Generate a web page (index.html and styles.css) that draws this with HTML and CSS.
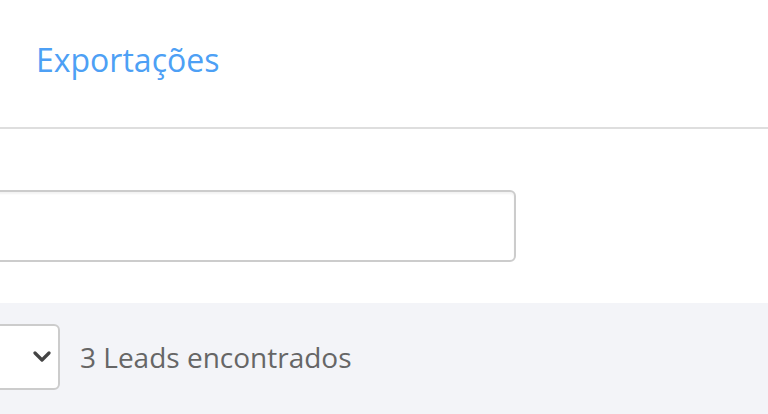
FILE: index.html
```html
<!DOCTYPE html>
<html lang="pt">
<head>
<meta charset="utf-8">
<link rel="stylesheet" href="styles.css">
</head>
<body>
<header class="header">
  <a class="tab">Exportações</a>
</header>
<section class="search">
  <div class="search-input"></div>
</section>
<section class="toolbar">
  <div class="select">
    <svg class="chevron" width="18" height="12" viewBox="0 0 18 12"><path d="M2 2 L9 9 L16 2" fill="none" stroke="#444" stroke-width="3.2" stroke-linecap="round" stroke-linejoin="round"/></svg>
  </div>
  <span class="count">3 Leads encontrados</span>
</section>
</body>
</html>
```
FILE: styles.css
```css
html, body {
  margin: 0;
  padding: 0;
  background: #fff;
  font-family: "Open Sans", "Noto Sans", sans-serif;
  overflow: hidden;
  height: 414px;
}
.header {
  height: 127px;
  border-bottom: 2px solid #dedede;
  display: flex;
  align-items: center;
  padding-left: 36px;
}
.tab {
  color: #4da0f5;
  font-size: 32px;
  line-height: 1;
  margin-top: -8px;
}
.search {
  height: 174px;
  padding-top: 61px;
  box-sizing: border-box;
}
.search-input {
  margin-left: -20px;
  width: 536px;
  height: 72px;
  box-sizing: border-box;
  border: 2px solid #ccc;
  border-radius: 6px;
  box-shadow: inset 0 2px 2px rgba(0,0,0,0.05);
}
.toolbar {
  background: #f3f4f8;
  height: 111px;
  display: flex;
  align-items: flex-start;
  padding-top: 21px;
  box-sizing: border-box;
  gap: 20px;
}
.select {
  margin-left: -40px;
  width: 100px;
  height: 66px;
  box-sizing: border-box;
  background: #fff;
  border: 2px solid #ccc;
  border-radius: 6px;
  display: flex;
  align-items: center;
  justify-content: flex-end;
  padding-right: 7px;
}
.chevron {
  display: block;
}
.count {
  color: #666;
  font-size: 28px;
  line-height: 66px;
}
```
